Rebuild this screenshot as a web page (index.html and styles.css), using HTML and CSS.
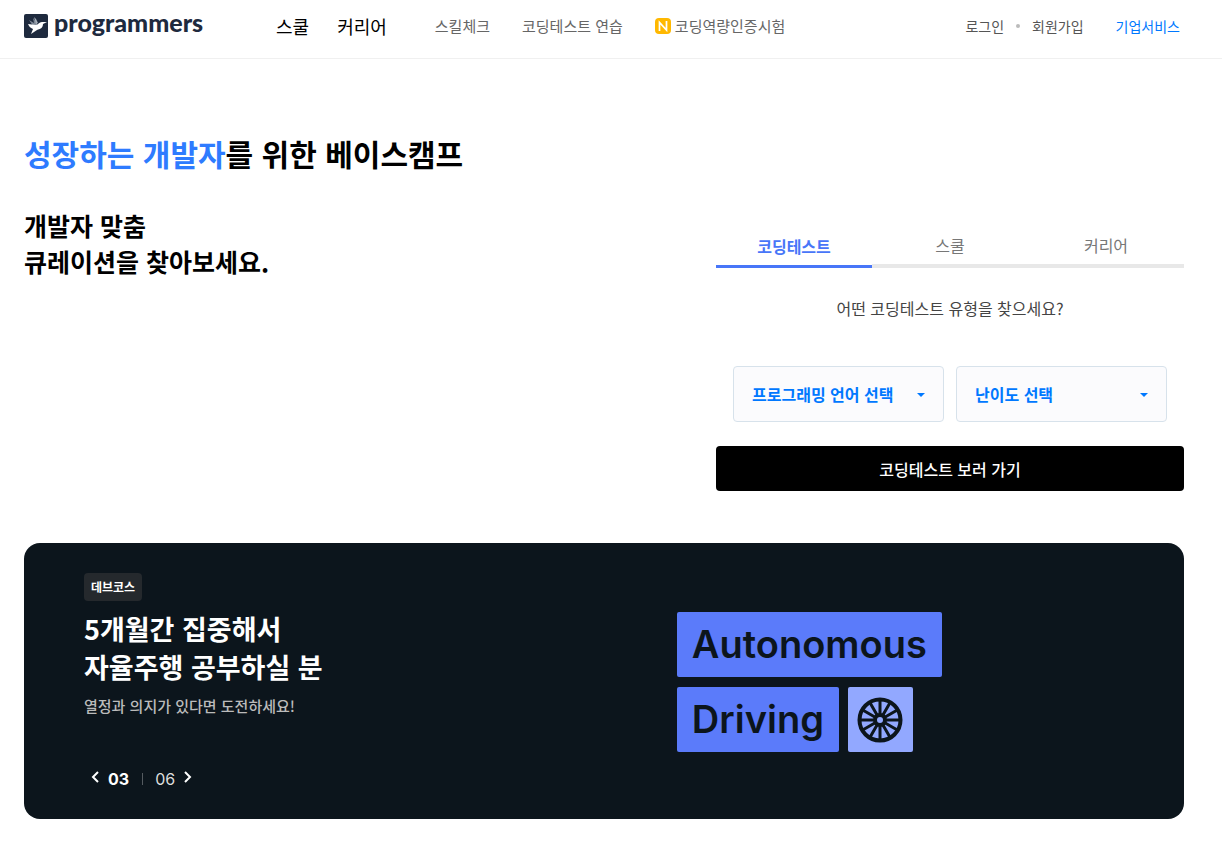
FILE: index.html
```html
<!DOCTYPE html>
<html lang="ko">
<head>
  <meta charset="UTF-8">
  <meta name="viewport" content="width=device-width, initial-scale=1.0">
  <title>프로그래머스</title>
  <link rel="stylesheet" href="styles.css">
</head>
<body>
  <header class="header">
    <a class="logo" href="#">
      <svg class="logo-mark" width="24" height="24" viewBox="0 0 24 24" aria-hidden="true">
        <rect width="24" height="24" rx="2" fill="#1e2a3e"/>
        <path d="M5 6l5 3-1-5 4 5 0 3-4 0z" fill="#7d8795"/>
        <path d="M10 3l2 2 2 4-2 1z" fill="#a7afb9"/>
        <path d="M4 10l8 1c2 0 3-3 6-3l5 0-4 2c0 4-3 5-6 6l-6 4 2-5c-3-1-4-3-5-5z" fill="#fff"/>
      </svg>
      <span class="logo-text">programmers</span>
    </a>
    <nav class="nav">
      <a class="nav-main" href="#">스쿨</a>
      <a class="nav-main" href="#">커리어</a>
      <a class="nav-sub first" href="#">스킬체크</a>
      <a class="nav-sub" href="#">코딩테스트 연습</a>
      <a class="nav-sub" href="#">
        <svg class="new-icon" width="16" height="16" viewBox="0 0 16 16" aria-hidden="true">
          <rect width="16" height="16" rx="4" fill="#ffb800"/>
          <path d="M4.500 13V4.500l7 7.500V3" fill="none" stroke="#fff" stroke-width="1.700"/>
        </svg>코딩역량인증시험</a>
    </nav>
    <div class="account">
      <a href="#">로그인</a>
      <span class="dot"></span>
      <a href="#">회원가입</a>
      <a class="business" href="#">기업서비스</a>
    </div>
  </header>

  <main class="container">
    <section class="hero">
      <div class="hero-text">
        <h1><span class="point">성장하는 개발자</span>를 위한 베이스캠프</h1>
        <h2>개발자 맞춤<br>큐레이션을 찾아보세요.</h2>
      </div>

      <form class="curation">
        <div class="tabs">
          <button type="button" class="tab active">코딩테스트</button>
          <button type="button" class="tab">스쿨</button>
          <button type="button" class="tab">커리어</button>
        </div>
        <p class="question">어떤 코딩테스트 유형을 찾으세요?</p>
        <div class="selects">
          <div class="select-box">
            <select aria-label="프로그래밍 언어 선택">
              <option>프로그래밍 언어 선택</option>
            </select>
            <svg class="caret" width="8" height="4" viewBox="0 0 8 4" aria-hidden="true"><path d="M0 0h8L4 4z" fill="#0078ff"/></svg>
          </div>
          <div class="select-box">
            <select aria-label="난이도 선택">
              <option>난이도 선택</option>
            </select>
            <svg class="caret" width="8" height="4" viewBox="0 0 8 4" aria-hidden="true"><path d="M0 0h8L4 4z" fill="#0078ff"/></svg>
          </div>
        </div>
        <button type="button" class="submit">코딩테스트 보러 가기</button>
      </form>
    </section>

    <section class="banner">
      <div class="banner-text">
        <span class="badge">데브코스</span>
        <h3>5개월간 집중해서<br>자율주행 공부하실 분</h3>
        <p>열정과 의지가 있다면 도전하세요!</p>
        <div class="pager">
          <button type="button" aria-label="이전"><svg width="8" height="12" viewBox="0 0 8 12"><path d="M7 1L2 6l5 5" fill="none" stroke="#fff" stroke-width="2"/></svg></button>
          <strong>03</strong>
          <span class="bar"></span>
          <span class="total">06</span>
          <button type="button" aria-label="다음"><svg width="8" height="12" viewBox="0 0 8 12"><path d="M1 1l5 5-5 5" fill="none" stroke="#fff" stroke-width="2"/></svg></button>
        </div>
      </div>
      <div class="art">
        <div class="art-row"><span class="word">Autonomous</span></div>
        <div class="art-row">
          <span class="word">Driving</span>
          <span class="wheel">
            <svg width="46" height="46" viewBox="-23 -23 46 46" aria-hidden="true">
              <g fill="none" stroke="#0c151c" stroke-width="3">
                <circle r="20.500" stroke-width="4"/>
                <circle r="5" stroke-width="4"/>
                <path id="spoke" d="M0-5V-20M0 5V20"/>
                <use href="#spoke" transform="rotate(30)"/>
                <use href="#spoke" transform="rotate(60)"/>
                <use href="#spoke" transform="rotate(90)"/>
                <use href="#spoke" transform="rotate(120)"/>
                <use href="#spoke" transform="rotate(150)"/>
              </g>
            </svg>
          </span>
        </div>
      </div>
    </section>
  </main>
</body>
</html>
```
FILE: styles.css
```css
* { box-sizing: border-box; }
body {
  margin: 0;
  background: #fff;
  color: #000;
  font-family: "Noto Sans CJK KR", sans-serif;
  font-size: 16px;
  line-height: 24px;
}
h1, h2, h3, p { margin: 0; }
a { color: inherit; text-decoration: none; }
button, select { font: inherit; cursor: pointer; }
svg { display: block; }

/* header */
.header {
  display: flex;
  align-items: center;
  height: 59px;
  padding: 0 42px 6px 24px;
  border-bottom: 1px solid #f0f0f0;
}
.logo { display: flex; align-items: center; gap: 6px; width: 252px; }
.logo-text {
  font-family: Lato, sans-serif;
  font-size: 25px;
  font-weight: 900;
  line-height: 24px;
  color: #1e2a3e;
  padding-bottom: 8px;
}
.nav { display: flex; align-items: center; }
.nav-main { font-size: 18px; margin-right: 28px; }
.nav-sub {
  display: flex;
  align-items: center;
  gap: 4px;
  margin-right: 32px;
  font-size: 15px;
  color: #666;
}
.nav-sub.first { margin-left: 20px; }
.account {
  display: flex;
  align-items: center;
  gap: 12px;
  margin-left: auto;
  font-size: 14px;
  color: #555;
}
.dot { width: 4px; height: 4px; border-radius: 50%; background: #bbb; }
.business { margin-left: 20px; color: #0078ff; }

.container { padding: 0 38px 30px 24px; }

/* hero */
.hero {
  display: grid;
  grid-template-columns: 1fr 468px;
  padding-top: 72px;
}
h1 { font-size: 30px; font-weight: 700; line-height: 44px; }
.point { color: #2e7bff; }
h2 { margin-top: 32px; font-size: 25px; font-weight: 700; line-height: 36px; }
.curation { margin-top: 95px; }
.tabs { display: grid; grid-template-columns: repeat(3, 1fr); }
.tab {
  height: 42px;
  padding: 0;
  border: 0;
  border-bottom: 4px solid #e8e8e8;
  background: none;
  color: #777;
}
.tab.active {
  border-bottom: 3px solid #4876f8;
  color: #4876f8;
  font-weight: 700;
}
.question { margin-top: 28px; text-align: center; color: #444; }
.selects {
  display: grid;
  grid-template-columns: 1fr 1fr;
  gap: 12px;
  padding: 0 17px;
  margin: 46px 0 24px;
}
.select-box { position: relative; }
.select-box select {
  display: block;
  width: 100%;
  height: 56px;
  padding: 0 18px;
  border: 1px solid #d7e2eb;
  border-radius: 4px;
  background: #fbfbfd;
  color: #0078ff;
  font-weight: 700;
  appearance: none;
}
.caret { position: absolute; top: 27px; right: 19px; pointer-events: none; }
.submit {
  display: block;
  width: 100%;
  height: 45px;
  border: 0;
  border-radius: 4px;
  background: #000;
  color: #fff;
  font-weight: 500;
}

/* banner */
.banner {
  display: grid;
  grid-template-columns: 57% 1fr;
  align-items: center;
  margin-top: 52px;
  padding: 30px 60px 28px;
  border-radius: 16px;
  background: #0c151c;
  color: #fff;
}
.badge {
  display: block;
  width: fit-content;
  padding: 0 7px;
  border-radius: 4px;
  background: #25292d;
  font-size: 12px;
  font-weight: 700;
  line-height: 28px;
}
h3 { margin-top: 9px; font-size: 27px; font-weight: 700; line-height: 38px; }
.banner-text p { margin-top: 8px; font-size: 15px; font-weight: 500; color: #bbb; }
.pager {
  display: flex;
  align-items: center;
  margin-top: 49px;
  padding-left: 7px;
  font-family: Inter, sans-serif;
}
.pager button { padding: 0 0 4px; border: 0; background: none; }
.pager strong { margin: 0 13px 0 9px; }
.bar { width: 1px; height: 12px; background: #555b60; }
.total { margin: 0 9px 0 12px; color: #ddd; }

.art { display: grid; gap: 10px; }
.art-row { display: flex; gap: 9px; }
.word {
  padding: 0 15px;
  border-radius: 2px;
  background: #5b7bfa;
  color: #0c151c;
  font-family: Inter, sans-serif;
  font-size: 38px;
  font-weight: 600;
  line-height: 65px;
}
.wheel {
  display: grid;
  place-items: center;
  width: 65px;
  height: 65px;
  border-radius: 2px;
  background: #92a8ff;
}
```
